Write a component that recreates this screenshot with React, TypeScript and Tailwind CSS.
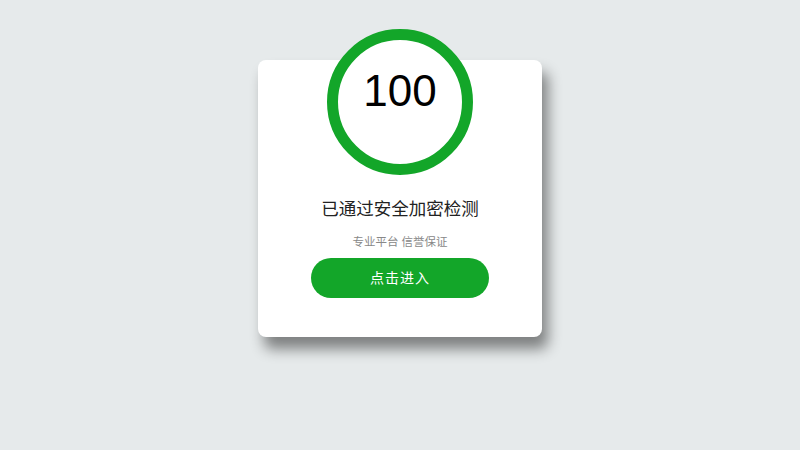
import React from "react";

export default function App() {
  return (
    <div
      className="w-[800px] h-[450px] bg-[#e6eaeb] flex flex-col items-center overflow-hidden"
      style={{ fontFamily: '"Liberation Sans", "Noto Sans CJK SC", sans-serif' }}
    >
      <div className="mt-[60px] w-[284px] bg-white rounded-[8px] shadow-[6px_12px_14px_rgba(0,0,0,0.45)] flex flex-col items-center pb-[39px]">
        <div className="-mt-[31px] w-[146px] h-[146px] rounded-full border-[11px] border-[#13a629] bg-white flex flex-col items-center pt-[29px]">
          <span className="text-[44px] leading-[44px] text-black">100</span>
        </div>
        <div className="mt-[22px] text-[17.5px] leading-[24px] text-[#222]">已通过安全加密检测</div>
        <div className="mt-[13px] text-[11.5px] leading-[16px] text-[#888]">专业平台 信誉保证</div>
        <button className="mt-[8px] w-[178px] h-[40px] rounded-full bg-[#13a629] text-white text-[14px] tracking-[1px]">
          点击进入
        </button>
      </div>
    </div>
  );
}
